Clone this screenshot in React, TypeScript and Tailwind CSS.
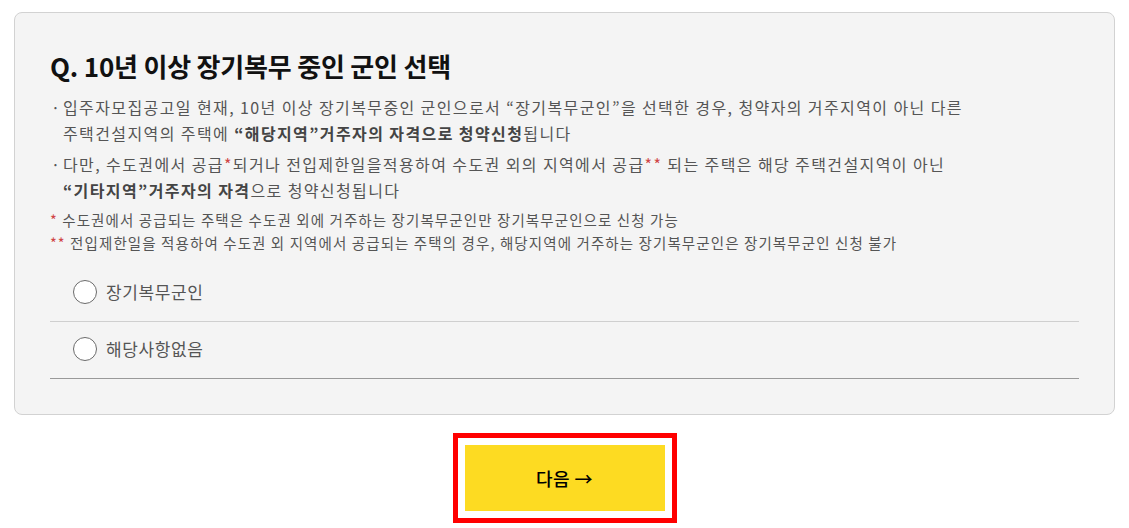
import { useState } from "react"

const font = { fontFamily: '"Noto Sans CJK KR", "Noto Sans", sans-serif' }

const options = ["장기복무군인", "해당사항없음"]

export default function App() {
  const [selected, setSelected] = useState<string | null>(null)

  return (
    <div className="min-h-[528px] bg-white px-[14px] pt-[12px]" style={font}>
      <section className="rounded-lg border border-[#d2d2d2] bg-[#f4f4f4] px-[35px] pt-[36px] pb-[35px]">
        <h2 className="text-[26px] font-bold leading-[34px] tracking-[-0.2px] text-[#111]">
          Q. 10년 이상 장기복무 중인 군인 선택
        </h2>

        <ul className="mt-[11px] text-[16px] leading-[26px] tracking-[1.4px] text-[#555]">
          <li className="flex">
            <span className="w-[13px] shrink-0 pl-[1px]">·</span>
            <p>
              입주자모집공고일 현재, 10년 이상 장기복무중인 군인으로서 “장기복무군인”을 선택한 경우, 청약자의 거주지역이 아닌 다른
              <br />
              주택건설지역의 주택에 <b className="font-bold text-[#444]">“해당지역”거주자의 자격으로 청약신청</b>됩니다
            </p>
          </li>
          <li className="mt-[5px] flex">
            <span className="w-[13px] shrink-0 pl-[1px]">·</span>
            <p>
              다만, 수도권에서 공급<span className="text-[#d04545]">*</span>되거나 전입제한일을적용하여 수도권 외의 지역에서 공급
              <span className="text-[#d04545]">**</span> 되는 주택은 해당 주택건설지역이 아닌
              <br />
              <b className="font-bold text-[#444]">“기타지역”거주자의 자격</b>으로 청약신청됩니다
            </p>
          </li>
        </ul>

        <div className="mt-[5px] text-[14.5px] leading-[23px] tracking-[1.1px] text-[#555]">
          <p>
            <span className="text-[#d04545]">*</span> 수도권에서 공급되는 주택은 수도권 외에 거주하는 장기복무군인만 장기복무군인으로 신청 가능
          </p>
          <p>
            <span className="text-[#d04545]">**</span> 전입제한일을 적용하여 수도권 외 지역에서 공급되는 주택의 경우, 해당지역에 거주하는 장기복무군인은 장기복무군인 신청 불가
          </p>
        </div>

        <div className="mt-[11px]">
          {options.map((opt, i) => (
            <label
              key={opt}
              className={`flex h-[57px] cursor-pointer items-center gap-[9px] pb-[2px] pl-[23px] ${
                i === options.length - 1 ? "border-b border-[#999]" : "border-b border-[#cfcfcf]"
              }`}
            >
              <input
                type="radio"
                name="soldier"
                className="sr-only"
                checked={selected === opt}
                onChange={() => setSelected(opt)}
              />
              <span className="flex h-[24px] w-[24px] items-center justify-center rounded-full border-[1.5px] border-[#6b6b6b] bg-white">
                {selected === opt && <span className="h-[11px] w-[11px] rounded-full bg-[#333]" />}
              </span>
              <span className="text-[17px] tracking-[0.6px] text-[#555]">{opt}</span>
            </label>
          ))}
        </div>
      </section>

      <div className="flex justify-center pt-[18px]">
        <div className="border-[5px] border-[#ff0000] p-[7px]">
          <button
            type="button"
            className="flex h-[66px] w-[200px] items-center justify-center bg-[#fddb22] text-[18px] font-medium tracking-[0.5px] text-black"
          >
            다음 →
          </button>
        </div>
      </div>
    </div>
  )
}
